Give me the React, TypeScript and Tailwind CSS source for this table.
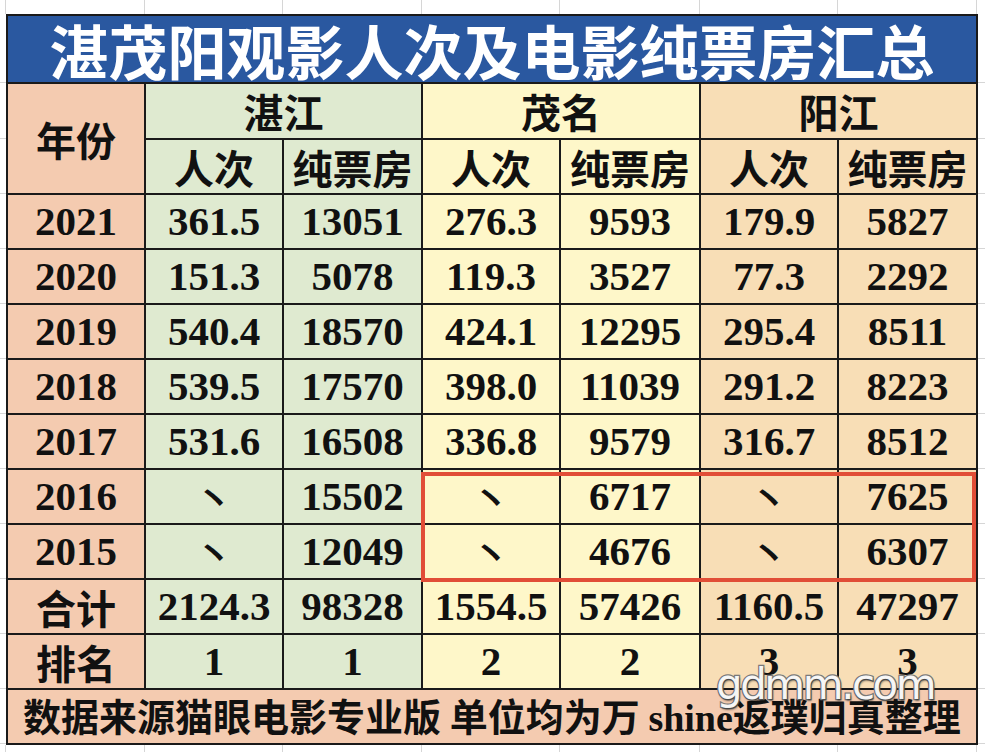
import React from "react";

const Y = "bg-[#f4cbb0]";
const G = "bg-[#dfead0]";
const M = "bg-[#fef7c9]";
const J = "bg-[#f8deb6]";
const BGS = [Y, G, G, M, M, J, J];

const CJK = "font-['Noto_Sans_CJK_SC',sans-serif] font-bold leading-none text-[#111]";
const NUM = "font-['Liberation_Serif','Noto_Sans_CJK_SC',serif] font-bold leading-none text-[#111]";

const rowsTop: string[][] = [
  ["2021", "361.5", "13051", "276.3", "9593", "179.9", "5827"],
  ["2020", "151.3", "5078", "119.3", "3527", "77.3", "2292"],
  ["2019", "540.4", "18570", "424.1", "12295", "295.4", "8511"],
  ["2018", "539.5", "17570", "398.0", "11039", "291.2", "8223"],
  ["2017", "531.6", "16508", "336.8", "9579", "316.7", "8512"],
];
const row2016 = ["2016", "丶", "15502", "丶", "6717", "丶", "7625"];
const row2015 = ["2015", "丶", "12049", "丶", "4676", "丶", "6307"];
const rowsBottom: string[][] = [
  ["合计", "2124.3", "98328", "1554.5", "57426", "1160.5", "47297"],
  ["排名", "1", "1", "2", "2", "3", "3"],
];

function Cell({ bg, text, cjk }: { bg: string; text: string; cjk?: boolean }) {
  if (text === "丶") {
    return (
      <div className={`${bg} flex items-center justify-center`}>
        <span className="font-['Noto_Sans_CJK_SC',sans-serif] font-medium text-[40px] leading-none text-[#111]">丶</span>
      </div>
    );
  }
  return (
    <div className={`${bg} flex items-center justify-center`}>
      <span className={cjk ? `${CJK} text-[40px]` : `${NUM} text-[41px]`}>{text}</span>
    </div>
  );
}

const stripCols = ["w-[6px]", "w-[139px]", "w-[138px]", "w-[139px]", "w-[138px]", "w-[140px]", "w-[138px]", "w-[139px]"];
const stripRows = ["h-[69px]", "h-[56px]", "h-[55px]", "h-[55px]", "h-[55px]", "h-[55px]", "h-[55px]", "h-[55px]", "h-[55px]", "h-[55px]", "h-[55px]", "h-[55px]", "h-[55px]"];

function HStrip({ h }: { h: string }) {
  return (
    <div className={`flex ${h}`}>
      {stripCols.map((w, i) => (
        <div key={i} className={`${w} shrink-0 border-r border-[#d6d6d6]`} />
      ))}
      <div className="flex-1" />
    </div>
  );
}

function VStrip({ w }: { w: string }) {
  return (
    <div className={`flex flex-col ${w}`}>
      {stripRows.map((h, i) => (
        <div key={i} className={`${h} shrink-0 border-b border-[#d6d6d6]`} />
      ))}
    </div>
  );
}

export default function App() {
  return (
    <div className="relative w-[985px] h-[752px] overflow-hidden bg-white flex flex-col">
      <HStrip h="h-[14px]" />
      <div className="flex">
        <VStrip w="w-[6px] shrink-0" />
        <div className="grid grid-cols-[136px_136px_137px_136px_138px_136px_137px] grid-rows-[66px_54px_53px_repeat(10,53px)] gap-[2px] bg-[#1a1a1a] p-[2px] shrink-0">
          {/* Title */}
          <div className="col-span-7 bg-[#2a58a0] flex items-center justify-center">
            <span className="font-['Noto_Sans_CJK_SC',sans-serif] font-bold text-[59px] leading-none text-white">
              湛茂阳观影人次及电影纯票房汇总
            </span>
          </div>
          {/* Header row 1 */}
          <div className={`${Y} row-span-2 flex items-center justify-center`}>
            <span className={`${CJK} text-[40px]`}>年份</span>
          </div>
          <div className={`${G} col-span-2 flex items-center justify-center`}>
            <span className={`${CJK} text-[40px]`}>湛江</span>
          </div>
          <div className={`${M} col-span-2 flex items-center justify-center`}>
            <span className={`${CJK} text-[40px]`}>茂名</span>
          </div>
          <div className={`${J} col-span-2 flex items-center justify-center`}>
            <span className={`${CJK} text-[40px]`}>阳江</span>
          </div>
          {/* Header row 2 */}
          <Cell bg={G} text="人次" cjk />
          <Cell bg={G} text="纯票房" cjk />
          <Cell bg={M} text="人次" cjk />
          <Cell bg={M} text="纯票房" cjk />
          <Cell bg={J} text="人次" cjk />
          <Cell bg={J} text="纯票房" cjk />
          {/* Data rows */}
          {rowsTop.map((r) =>
            r.map((v, i) => <Cell key={r[0] + i} bg={BGS[i]} text={v} />)
          )}
          {/* 2016 row first three */}
          {row2016.slice(0, 3).map((v, i) => (
            <Cell key={"a" + i} bg={BGS[i]} text={v} />
          ))}
          {/* highlighted block */}
          <div className="col-span-4 row-span-2 relative z-10 grid grid-cols-[136px_138px_136px_137px] grid-rows-[53px_53px] gap-[2px] bg-[#1a1a1a]">
            {row2016.slice(3).map((v, i) => (
              <Cell key={"b" + i} bg={BGS[i + 3]} text={v} />
            ))}
            {row2015.slice(3).map((v, i) => (
              <Cell key={"c" + i} bg={BGS[i + 3]} text={v} />
            ))}
            <div className="pointer-events-none absolute left-[-2px] right-0 top-[2px] bottom-[-4px] border-4 border-[#e14d37]" />
          </div>
          {row2015.slice(0, 3).map((v, i) => (
            <Cell key={"d" + i} bg={BGS[i]} text={v} />
          ))}
          {rowsBottom.map((r) =>
            r.map((v, i) => <Cell key={r[0] + i} bg={BGS[i]} text={v} cjk={i === 0} />)
          )}
          {/* Footer */}
          <div className={`${Y} col-span-7 flex items-center justify-center`}>
            <span className={`${CJK} text-[38px] whitespace-pre`}>
              数据来源猫眼电影专业版 单位均为万 <span className={`${NUM} text-[38px]`}>shine</span>返璞归真整理
            </span>
          </div>
        </div>
        <VStrip w="flex-1" />
      </div>
      <HStrip h="flex-1" />
      {/* Watermark */}
      <div className="absolute left-[716px] top-[664px] font-['DejaVu_Sans',sans-serif] text-[42px] tracking-[-2.5px] leading-none text-white/95 [-webkit-text-stroke:2.5px_#7a7a7a] [paint-order:stroke_fill] [text-shadow:1px_2px_2px_rgba(0,0,0,0.45)]">
        gdmm.com
      </div>
    </div>
  );
}
